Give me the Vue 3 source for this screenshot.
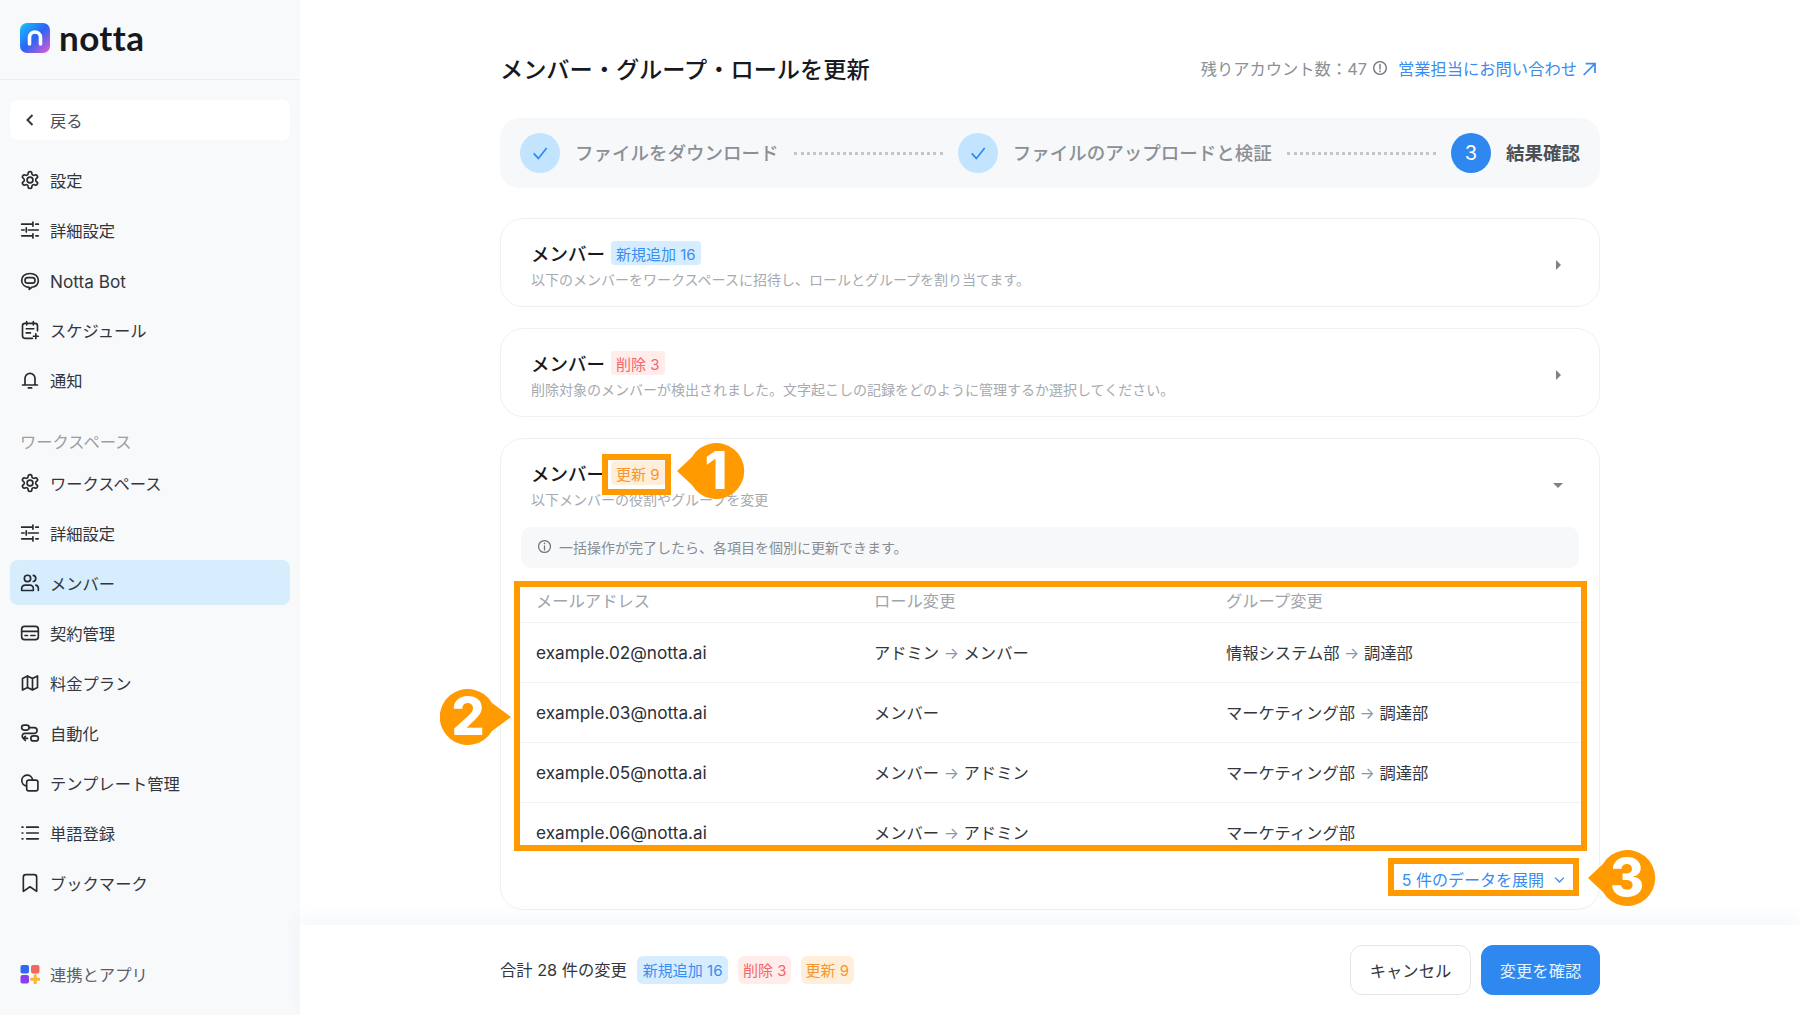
<script setup>
const topNav = [
  { icon: "gear", label: "設定" },
  { icon: "sliders", label: "詳細設定" },
  { icon: "bot", label: "Notta Bot", latin: true },
  { icon: "calendar", label: "スケジュール" },
  { icon: "bell", label: "通知" },
];

const workspaceNav = [
  { icon: "gear", label: "ワークスペース" },
  { icon: "sliders", label: "詳細設定" },
  { icon: "users", label: "メンバー", active: true },
  { icon: "card", label: "契約管理" },
  { icon: "map", label: "料金プラン" },
  { icon: "route", label: "自動化" },
  { icon: "template", label: "テンプレート管理" },
  { icon: "list", label: "単語登録" },
  { icon: "bookmark", label: "ブックマーク" },
];

const rows = [
  { email: "example.02@notta.ai", role: ["アドミン", "メンバー"], group: ["情報システム部", "調達部"] },
  { email: "example.03@notta.ai", role: ["メンバー"], group: ["マーケティング部", "調達部"] },
  { email: "example.05@notta.ai", role: ["メンバー", "アドミン"], group: ["マーケティング部", "調達部"] },
  { email: "example.06@notta.ai", role: ["メンバー", "アドミン"], group: ["マーケティング部"] },
];
</script>

<template>
  <div class="app">
    <aside class="sidebar">
      <div class="logo">
        <svg class="logo-mark" viewBox="0 0 30 30">
          <defs>
            <linearGradient id="logoGrad" x1="0" y1="0" x2="1" y2="1">
              <stop offset="0" stop-color="#12c8ff" />
              <stop offset="0.5" stop-color="#2b63f5" />
              <stop offset="1" stop-color="#e85bd0" />
            </linearGradient>
          </defs>
          <rect width="30" height="30" rx="7" fill="url(#logoGrad)" />
          <path d="M9.5 21v-6.5a5.5 5.5 0 0 1 11 0V21" fill="none" stroke="#fff" stroke-width="3.6" stroke-linecap="round" />
        </svg>
        <span class="logo-text">notta</span>
      </div>

      <div class="back">
        <svg class="back-icon" viewBox="0 0 24 24"><path d="M15 6l-6 6 6 6" /></svg>
        <span>戻る</span>
      </div>

      <nav class="nav">
        <div v-for="item in topNav" :key="item.label" class="nav-item" :class="{ 'nav-item--latin': item.latin }">
          <svg class="nav-icon" viewBox="0 0 24 24">
            <use :href="'#i-' + item.icon" />
          </svg>
          <span>{{ item.label }}</span>
        </div>
      </nav>

      <div class="nav-title">ワークスペース</div>

      <nav class="nav">
        <div
          v-for="item in workspaceNav"
          :key="item.label"
          class="nav-item"
          :class="{ 'nav-item--active': item.active }"
        >
          <svg class="nav-icon" viewBox="0 0 24 24">
            <use :href="'#i-' + item.icon" />
          </svg>
          <span>{{ item.label }}</span>
        </div>
      </nav>

      <div class="apps">
        <svg class="nav-icon" viewBox="0 0 20 20">
          <rect x="0.5" y="1" width="8.5" height="8.5" rx="2" fill="#2f6bf2" stroke="none" />
          <rect x="11" y="1" width="8.5" height="8.5" rx="2" fill="#f2685f" stroke="none" />
          <rect x="0.5" y="11" width="8.5" height="8.5" rx="2" fill="#8a3df0" stroke="none" />
          <path d="M15.2 11.500v7.500M11.500 15.200h7.500" stroke="#fbb731" stroke-width="3" stroke-linecap="round" />
        </svg>
        <span>連携とアプリ</span>
      </div>
    </aside>

    <div class="content">
      <main class="main">
        <header class="page-head">
          <h1 class="page-title">メンバー・グループ・ロールを更新</h1>
          <div class="quota">
            <span>残りアカウント数：47</span>
            <svg class="quota-info" viewBox="0 0 24 24">
              <circle cx="12" cy="12" r="9.5" />
              <path d="M12 6.5v7M12 16.5v1" />
            </svg>
            <a class="quota-link">営業担当にお問い合わせ</a>
            <svg class="quota-arrow" viewBox="0 0 24 24"><path d="M4 21L20 5M7 4h14v14" /></svg>
          </div>
        </header>

        <div class="stepper">
          <span class="step-dot step-dot--done">
            <svg viewBox="0 0 24 24"><path d="M4.5 12.5l5.5 6L20 6" /></svg>
          </span>
          <span class="step-label">ファイルをダウンロード</span>
          <span class="step-line"></span>
          <span class="step-dot step-dot--done">
            <svg viewBox="0 0 24 24"><path d="M4.5 12.5l5.5 6L20 6" /></svg>
          </span>
          <span class="step-label">ファイルのアップロードと検証</span>
          <span class="step-line"></span>
          <span class="step-dot step-dot--current">3</span>
          <span class="step-label step-label--current">結果確認</span>
        </div>

        <section class="card">
          <div class="card-head">
            <div class="card-title">メンバー<span class="badge badge--blue">新規追加 16</span></div>
            <div class="card-sub">以下のメンバーをワークスペースに招待し、ロールとグループを割り当てます。</div>
            <span class="caret"></span>
          </div>
        </section>

        <section class="card">
          <div class="card-head">
            <div class="card-title">メンバー<span class="badge badge--red">削除 3</span></div>
            <div class="card-sub">削除対象のメンバーが検出されました。文字起こしの記録をどのように管理するか選択してください。</div>
            <span class="caret"></span>
          </div>
        </section>

        <section class="card">
          <div class="card-head">
            <div class="card-title">メンバー<span class="badge badge--orange">更新 9</span></div>
            <div class="card-sub">以下メンバーの役割やグループを変更</div>
            <span class="caret caret--open"></span>
          </div>

          <div class="notice">
            <svg class="notice-icon" viewBox="0 0 24 24">
              <circle cx="12" cy="12" r="9.5" />
              <path d="M12 11v6.5M12 6.5v1" />
            </svg>
            一括操作が完了したら、各項目を個別に更新できます。
          </div>

          <div class="table">
            <div class="table-row table-row--head">
              <span>メールアドレス</span>
              <span>ロール変更</span>
              <span>グループ変更</span>
            </div>
            <div v-for="row in rows" :key="row.email" class="table-row">
              <span class="email">{{ row.email }}</span>
              <span>
                {{ row.role[0] }}
                <template v-if="row.role[1]"><i class="to">→</i> {{ row.role[1] }}</template>
              </span>
              <span>
                {{ row.group[0] }}
                <template v-if="row.group[1]"><i class="to">→</i> {{ row.group[1] }}</template>
              </span>
            </div>
          </div>

          <div class="expand">
            <span>5 件のデータを展開</span>
            <svg viewBox="0 0 24 24"><path d="M5 9l7 7 7-7" /></svg>
          </div>
        </section>
      </main>

      <footer class="footer">
        <div class="summary">
          <span class="summary-text">合計 28 件の変更</span>
          <span class="badge badge--blue">新規追加 16</span>
          <span class="badge badge--red">削除 3</span>
          <span class="badge badge--orange">更新 9</span>
        </div>
        <div class="actions">
          <button class="btn">キャンセル</button>
          <button class="btn btn--primary">変更を確認</button>
        </div>
      </footer>
    </div>

    <!-- annotations drawn over the screenshot -->
    <div class="mark mark-1"></div>
    <div class="mark mark-2"></div>
    <div class="mark mark-3"></div>
    <div class="pin pin-1">
      <svg viewBox="0 0 71 56"><path d="M0 28L15 14A28 28 0 1 1 15 42Z" fill="#ff9a00" /></svg>
      <span>1</span>
    </div>
    <div class="pin pin-2">
      <svg viewBox="0 0 71 56"><path d="M71 28L52 14A28 28 0 1 0 52 42Z" fill="#ff9a00" /></svg>
      <span>2</span>
    </div>
    <div class="pin pin-3">
      <svg viewBox="0 0 71 56"><path d="M0 28L15 14A28 28 0 1 1 15 42Z" fill="#ff9a00" /></svg>
      <span>3</span>
    </div>

    <svg class="sprite" width="0" height="0">
      <symbol id="i-gear" viewBox="0 0 24 24">
        <path d="M12.22 2h-.44a2 2 0 0 0-2 2v.18a2 2 0 0 1-1 1.73l-.43.25a2 2 0 0 1-2 0l-.15-.08a2 2 0 0 0-2.73.73l-.22.38a2 2 0 0 0 .73 2.73l.15.1a2 2 0 0 1 1 1.72v.51a2 2 0 0 1-1 1.74l-.15.09a2 2 0 0 0-.73 2.73l.22.38a2 2 0 0 0 2.73.73l.15-.08a2 2 0 0 1 2 0l.43.25a2 2 0 0 1 1 1.73V20a2 2 0 0 0 2 2h.44a2 2 0 0 0 2-2v-.18a2 2 0 0 1 1-1.73l.43-.25a2 2 0 0 1 2 0l.15.08a2 2 0 0 0 2.73-.73l.22-.39a2 2 0 0 0-.73-2.73l-.15-.08a2 2 0 0 1-1-1.74v-.5a2 2 0 0 1 1-1.74l.15-.09a2 2 0 0 0 .73-2.73l-.22-.38a2 2 0 0 0-2.73-.73l-.15.08a2 2 0 0 1-2 0l-.43-.25a2 2 0 0 1-1-1.73V4a2 2 0 0 0-2-2z" />
        <circle cx="12" cy="12" r="3.5" />
      </symbol>
      <symbol id="i-sliders" viewBox="0 0 24 24">
        <path d="M2 5h12M19 5h3M2 12h3M10 12h12M2 19h12M19 19h3M15.500 2.500v5M7.500 9.500v5M15.500 16.500v5" />
      </symbol>
      <symbol id="i-bot" viewBox="0 0 24 24">
        <path d="M12 3c6 0 10 3.600 10 8.300 0 4.300-3.300 7.500-7.800 8.200L11 22v-2.400c-5.200-.4-9-3.800-9-8.300C2 6.600 6 3 12 3z" />
        <rect x="6" y="8" width="12" height="6.500" rx="3.200" />
      </symbol>
      <symbol id="i-calendar" viewBox="0 0 24 24">
        <path d="M21 13V7a3 3 0 0 0-3-3H6a3 3 0 0 0-3 3v12a3 3 0 0 0 3 3h9M8 2v4M16 2v4M7.500 10.500h9M7.500 15.500h5M19 16.500v6M16 19.500h6" />
      </symbol>
      <symbol id="i-bell" viewBox="0 0 24 24">
        <path d="M6 18V10a6 6 0 0 1 12 0v8M3 18h18M10 21.500h4" />
      </symbol>
      <symbol id="i-users" viewBox="0 0 24 24">
        <circle cx="9" cy="6.500" r="3.800" />
        <path d="M2 21v-2.500a4 4 0 0 1 4-4h6a4 4 0 0 1 4 4V21ZM16 2.800a3.800 3.800 0 0 1 0 7.400M19 14.500a4 4 0 0 1 3 4V21" />
      </symbol>
      <symbol id="i-card" viewBox="0 0 24 24">
        <rect x="2" y="4" width="20" height="16" rx="3.500" />
        <path d="M2 10h20M6 15h3M13 15h5" />
      </symbol>
      <symbol id="i-map" viewBox="0 0 24 24">
        <path d="M3 6.500l6-3 6 3 6-3v14l-6 3-6-3-6 3zM9 3.500v14M15 6.500v14" />
      </symbol>
      <symbol id="i-route" viewBox="0 0 24 24">
        <rect x="2" y="2.500" width="9" height="6" rx="3" />
        <rect x="13" y="15.500" width="9" height="6" rx="3" />
        <path d="M11 5.500h6a3.500 3.500 0 0 1 0 7H6a3.300 3.300 0 0 0-2 6h5M6.500 16L3.800 18.500l2.700 2.500" />
      </symbol>
      <symbol id="i-template" viewBox="0 0 24 24">
        <path d="M7.500 15.500A6.500 6.500 0 1 1 15 7.800" />
        <rect x="8" y="8.500" width="13.500" height="13" rx="2.500" />
      </symbol>
      <symbol id="i-list" viewBox="0 0 24 24">
        <path d="M8 5h14M8 12h14M8 19h14M2.500 5h1M2.500 12h1M2.500 19h1" />
      </symbol>
      <symbol id="i-bookmark" viewBox="0 0 24 24">
        <path d="M4 5a3 3 0 0 1 3-3h10a3 3 0 0 1 3 3v17l-8-5.500L4 22z" />
      </symbol>
    </svg>
  </div>
</template>

<style>
html,
body {
  margin: 0;
  background: #fff;
}
</style>

<style scoped>
.app {
  position: relative;
  display: flex;
  height: 100vh;
  overflow: hidden;
  background: #fff;
  color: #33373d;
  font-family: Inter, "Noto Sans CJK JP", sans-serif;
  font-size: 16.3px;
}

.sprite {
  position: absolute;
}

/* --- Sidebar --- */
.sidebar {
  position: relative;
  flex: 0 0 300px;
  box-sizing: border-box;
  background: #f8f9fb;
}

.logo {
  display: flex;
  align-items: center;
  gap: 9px;
  height: 75px;
  padding: 0 0 4px 20px;
  border-bottom: 1px solid #eceef1;
}

.logo-mark {
  width: 30px;
  height: 30px;
}

.logo-text {
  color: #16181c;
  font-family: Lato, sans-serif;
  font-size: 35px;
  font-weight: 700;
  letter-spacing: 0.4px;
  line-height: 1;
}

.back {
  display: flex;
  align-items: center;
  gap: 10px;
  height: 39px;
  margin: 20px 10px 17px;
  padding: 0 0 1px 10px;
  border-radius: 8px;
  background: #fff;
  color: #4a4e55;
}

.back-icon {
  width: 20px;
  height: 20px;
  fill: none;
  stroke: #33373d;
  stroke-width: 2.4;
}

.nav {
  display: flex;
  flex-direction: column;
  gap: 5px;
  margin: 0 10px;
}

.nav-item {
  display: flex;
  align-items: center;
  gap: 10px;
  height: 45px;
  padding-left: 10px;
  border-radius: 8px;
}

.nav-item--latin {
  padding-top: 3px;
  height: 42px;
  font-size: 17.2px;
}

.nav-item--active {
  background: #d6edfd;
}

.nav-icon {
  flex: none;
  width: 20px;
  height: 20px;
  fill: none;
  stroke: #272a2f;
  stroke-width: 2;
  stroke-linecap: round;
  stroke-linejoin: round;
}

.nav-title {
  margin: 28px 0 6px 20px;
  color: #9a9ea5;
  line-height: 24px;
}

.apps {
  position: absolute;
  left: 20px;
  top: 961px;
  display: flex;
  align-items: center;
  gap: 10px;
  height: 26px;
  color: #5b6068;
}

/* --- Main column --- */
.content {
  flex: 1;
  display: flex;
  flex-direction: column;
  min-width: 0;
}

.main {
  flex: 1;
  min-height: 0;
  padding: 48px 200px 0;
  overflow: hidden;
}

.page-head {
  display: flex;
  align-items: center;
  justify-content: space-between;
  height: 40px;
  margin-bottom: 30px;
}

.page-title {
  margin: 0;
  color: #17191d;
  font-size: 23.2px;
  font-weight: 500;
}

.quota {
  display: flex;
  align-items: center;
  color: #8b9097;
}

.quota-info {
  width: 16px;
  height: 16px;
  margin: 0 10px 0 5px;
  fill: none;
  stroke: #6b7077;
  stroke-width: 2;
  stroke-linecap: round;
}

.quota-link {
  color: #3a8df0;
}

.quota-arrow {
  width: 16px;
  height: 16px;
  margin: 2px 3px 0 4px;
  fill: none;
  stroke: #3a8df0;
  stroke-width: 2.6;
}

.stepper {
  display: flex;
  align-items: center;
  gap: 15px;
  height: 70px;
  margin-bottom: 30px;
  padding: 0 20px;
  border-radius: 20px;
  background: #f7f8fa;
  font-size: 18.5px;
}

.step-dot {
  display: flex;
  flex: none;
  align-items: center;
  justify-content: center;
  width: 40px;
  height: 40px;
  border-radius: 50%;
}

.step-dot--done {
  background: #c2e4ff;
}

.step-dot--done svg {
  width: 20px;
  height: 20px;
  fill: none;
  stroke: #2f88f0;
  stroke-width: 2;
}

.step-dot--current {
  background: #2f88f0;
  color: #fff;
  font-size: 20px;
}

.step-label {
  padding-bottom: 2px;
  color: #8b9097;
  font-weight: 500;
}

.step-label--current {
  color: #4b5057;
  font-weight: 600;
}

.step-line {
  flex: 1;
  border-top: 3px dotted #c2c5ca;
}

.card {
  position: relative;
  margin-bottom: 21px;
  border: 1px solid #eef0f2;
  border-radius: 23px;
  background: #fff;
}

.card-head {
  position: relative;
  box-sizing: border-box;
  height: 87px;
  padding: 20px 30px 0;
}

.card-title {
  display: flex;
  align-items: center;
  gap: 6px;
  height: 28px;
  color: #17191d;
  font-size: 18.5px;
  font-weight: 500;
}

.card-sub {
  margin-top: 3px;
  color: #a6aab0;
  font-size: 14px;
  line-height: 20px;
}

.badge {
  display: inline-flex;
  align-items: center;
  height: 24px;
  padding: 0 5px;
  border-radius: 4px;
  font-size: 15px;
  font-weight: 400;
}

.badge--blue {
  background: #d6edff;
  color: #3a8df0;
}

.badge--red {
  background: #ffeceb;
  color: #f4686a;
}

.badge--orange {
  background: #ffeed9;
  color: #f8952e;
}

.caret {
  position: absolute;
  top: 41px;
  right: 38px;
  width: 0;
  height: 0;
  border-top: 5px solid transparent;
  border-bottom: 5px solid transparent;
  border-left: 5px solid #7d8289;
}

.caret--open {
  top: 44px;
  right: 36px;
  border-top: 5px solid #7d8289;
  border-bottom: 0;
  border-left: 5px solid transparent;
  border-right: 5px solid transparent;
}

.notice {
  display: flex;
  align-items: center;
  gap: 7px;
  box-sizing: border-box;
  height: 41px;
  margin: 1px 20px 0;
  padding: 0 0 2px 16px;
  border-radius: 10px;
  background: #f7f8fa;
  color: #888d94;
  font-size: 14px;
}

.notice-icon {
  width: 15px;
  height: 15px;
  fill: none;
  stroke: #6f747b;
  stroke-width: 2;
  stroke-linecap: round;
}

.table {
  height: 270px;
  margin: 11px 16px 0 20px;
  overflow: hidden;
}

.table-row {
  display: grid;
  grid-template-columns: 338px 352px 1fr;
  align-items: center;
  height: 60px;
  box-sizing: border-box;
  padding: 0 0 2px 15px;
  border-bottom: 1px solid #eff1f3;
  white-space: nowrap;
}

.table-row--head {
  height: 44px;
  color: #a0a4ab;
}

.email {
  padding-top: 2px;
  color: #2c3036;
  font-size: 17.2px;
}

.to {
  color: #8d97a8;
  font-style: normal;
  font-size: 16px;
}

.expand {
  display: flex;
  align-items: center;
  justify-content: flex-end;
  gap: 8px;
  height: 60px;
  padding-right: 32px;
  color: #3a8df0;
  font-size: 16px;
}

.expand svg {
  width: 15px;
  height: 15px;
  fill: none;
  stroke: #3a8df0;
  stroke-width: 2.2;
}

/* --- Footer --- */
.footer {
  position: relative;
  z-index: 1;
  flex: 0 0 90px;
  display: flex;
  align-items: center;
  justify-content: space-between;
  padding: 0 200px;
  background: #fff;
  box-shadow: 0 -8px 16px rgba(80, 120, 220, 0.06);
}

.summary {
  display: flex;
  align-items: center;
  gap: 10px;
}

.summary-text {
  padding-bottom: 2px;
}

.summary .badge {
  height: 28px;
  padding: 0 4.5px 1px;
  box-sizing: border-box;
  border-radius: 6px;
}

.summary .badge--blue {
  padding: 0 6px 1px;
}

.actions {
  display: flex;
  gap: 10px;
}

.btn {
  width: 121px;
  height: 50px;
  border: 1px solid #e4e6e9;
  border-radius: 12px;
  background: #fff;
  color: #33373d;
  font: inherit;
}

.btn--primary {
  width: 119px;
  border-color: #2f88f0;
  background: #2f88f0;
  color: #e8f3ff;
}

/* --- Annotations --- */
.mark {
  position: absolute;
  box-sizing: border-box;
  border: 6px solid #ff9a00;
}

.mark-1 {
  left: 602px;
  top: 454px;
  width: 69px;
  height: 41px;
}

.mark-2 {
  left: 514px;
  top: 581px;
  width: 1073px;
  height: 270px;
}

.mark-3 {
  left: 1388px;
  top: 858px;
  width: 191px;
  height: 38px;
}

.pin {
  position: absolute;
  width: 71px;
  height: 56px;
}

.pin svg {
  position: absolute;
  inset: 0;
  width: 71px;
  height: 56px;
}

.pin span {
  position: absolute;
  top: 9px;
  width: 56px;
  color: #fff;
  font-family: Inter, sans-serif;
  font-size: 52px;
  font-weight: 800;
  line-height: 38px;
  text-align: center;
}

.pin-1 {
  left: 677px;
  top: 443px;
}

.pin-1 span,
.pin-3 span {
  left: 11px;
}

.pin-2 {
  left: 440px;
  top: 689px;
}

.pin-2 span {
  left: 0;
}

.pin-3 {
  left: 1588px;
  top: 850px;
}
</style>
